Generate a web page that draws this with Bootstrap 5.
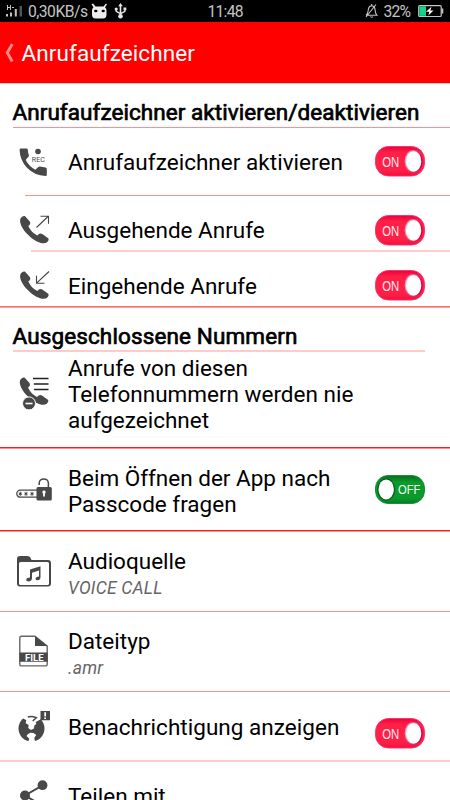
<!DOCTYPE html>
<html lang="de">
<head>
<meta charset="utf-8">
<meta name="viewport" content="width=device-width, initial-scale=1">
<title>Anrufaufzeichner</title>
<link href="https://cdn.jsdelivr.net/npm/bootstrap@5.3.0/dist/css/bootstrap.min.css" rel="stylesheet">
<style>
html,body{overflow:hidden}
body{font-family:Roboto,sans-serif;font-size:22.5px;line-height:26.4px;color:#000;background:#fff;height:800px;width:450px}
.statusbar{height:22px;background:#000;color:#c4c4c4;font-size:15.7px;line-height:22px}
.titlebar{height:61px;background:red;color:#fff;line-height:63px;letter-spacing:.09px}
.edge{height:1px;background:#dcc}
.heading{padding-left:12.5px;-webkit-text-stroke:.7px #000;letter-spacing:.06px}
.heading.h-2{letter-spacing:.12px}
.entry{width:450px}
.entry>svg{flex:none}
.label{width:307px;flex:none}
.sub{font-size:17.5px;line-height:20.5px;margin-top:4px;color:#666;font-style:italic;letter-spacing:.22px}
.rule{height:1px;background:#ff8e8e}
.rule-soft{height:2px;background:#ffcaca}
.rule-mid{height:2px;background:linear-gradient(#ff6a6a 50%,#ffa0a0 50%)}
.rule-strong{height:2px;background:linear-gradient(#ff1c1c 50%,#ff9090 50%)}
.h-1{height:43px;padding-top:15px}
.h-2{height:42px;padding-top:15px}
.r1{height:67px}.r1 .label{padding-top:21px;letter-spacing:.03px}.r1 .switch{margin-top:18px}
.r2{height:54px}.r2 .label{padding-top:21px}.r2 .switch{margin-top:18.5px}
.r3{height:54px}.r3 .label{padding-top:20.5px}.r3 .switch{margin-top:18px}
.r4{height:95px}.r4 .label{padding-top:2.5px}
.r5{height:81px}.r5 .label{padding-top:16px}.r5 .switch{margin-top:25.5px}
.r6{height:79px}.r6 .label{padding-top:16px}
.r7{height:79px}.r7 .label{padding-top:16px}
.r8{height:68px}.r8 .label{padding-top:22px;letter-spacing:.03px}.r8 .switch{margin-top:25.5px}
.r9{height:38px}.r9 .label{padding-top:21.4px}
</style>
<script src="https://cdn.jsdelivr.net/npm/bootstrap@5.3.0/dist/js/bootstrap.bundle.min.js"></script>
</head>
<body>
<svg width="0" height="0" class="position-absolute">
<defs>
<linearGradient id="pink" x1="0" y1="0" x2="0" y2="1"><stop offset="0" stop-color="#e8003c"/><stop offset=".2" stop-color="#ff2048"/><stop offset=".8" stop-color="#ff2048"/><stop offset="1" stop-color="#f0103c"/></linearGradient>
<linearGradient id="green" x1="0" y1="0" x2="0" y2="1"><stop offset="0" stop-color="#06701c"/><stop offset=".25" stop-color="#0c9a2c"/><stop offset=".8" stop-color="#0c9a2c"/><stop offset="1" stop-color="#087a20"/></linearGradient>
<linearGradient id="ring" x1="0" x2="1" y1="0" y2=".3"><stop offset="0" stop-color="#ffc0d4"/><stop offset="1" stop-color="#d0004e"/></linearGradient>
<symbol id="on" viewBox="0 0 50 31"><rect x=".5" y=".5" width="49" height="29.500" rx="13" fill="url(#pink)" stroke="#ff2a6c" stroke-width=".9"/><ellipse cx="38.700" cy="15.300" rx="9" ry="11.300" fill="url(#ring)"/><ellipse cx="38.600" cy="15.400" rx="7.700" ry="10.400" fill="#fff"/><text x="7.300" y="20.700" textLength="17" lengthAdjust="spacingAndGlyphs" font-family="Liberation Sans, sans-serif" font-size="14.500" fill="#ffe9ee">ON</text></symbol>
<symbol id="off" viewBox="0 0 50 29"><rect x=".5" y=".5" width="49" height="28" rx="12.500" fill="url(#green)" stroke="#0f8a36" stroke-width=".9"/><ellipse cx="11.200" cy="14.500" rx="9" ry="11" fill="#075d18"/><ellipse cx="11.200" cy="14.400" rx="7.700" ry="10" fill="#fff"/><text x="23" y="19.200" textLength="22.500" lengthAdjust="spacingAndGlyphs" font-family="Liberation Sans, sans-serif" font-size="13.300" fill="#f4fff6">OFF</text></symbol>
<path id="handset" d="M.7 3C2 1 4 0 5.500 1L10 6C11 7.500 10.500 9 8.500 10.500C10.500 15 13.500 18 17.500 20C19 18 20.500 17.300 22.500 18.400L28.400 22.800C29.300 23.800 28.800 25.500 27 27C23 29.500 15 26 9 20C2.500 14 -1 7 .7 3Z"/>
</defs>
</svg>

<div class="statusbar">
<svg class="d-block" width="450" height="22">
<g fill="#c4c4c4">
<path d="M7 5h1v2h2V5h1v5h-1V8H8v2H7zM12 7h2v1h-2zM6 14h2v2.500H6zM10 12.500h2v4h-2zM14.800 9h2v7.500h-2z"/><path d="M19.500 6h2.500v10.500h-2.500z" fill="#555"/>
<text x="28" y="16.500" textLength="60" font-size="15.700">0,30KB/s</text>
<path fill="#eee" d="M93 3.500l2.500 3h8l2.500-3 1 .8-2 2.900q1.500 1.200 1.500 3.300v4q0 4-3.500 4H95.500q-3.500 0-3.500-4v-4q0-2.100 1.500-3.300l-2-2.900z"/>
<ellipse cx="95.800" cy="11" rx="1.700" ry="1.300" fill="#000"/><ellipse cx="103.200" cy="11" rx="1.700" ry="1.300" fill="#000"/>
<g fill="#e6e6e6"><path d="M120.500 3l2.300 3.200h-4.600zM119.700 5.500h1.600v10h-1.600z"/><circle cx="120.500" cy="16.300" r="2.300"/><circle cx="116.200" cy="9" r="1.600"/><path d="M123.500 7.500h2.800v2.800h-2.800z"/></g>
<path d="M116.200 9.500v1.800l4.300 2.400 4.400-2.400V9" fill="none" stroke="#e6e6e6" stroke-width="1.400"/>
<text x="207.500" y="17" textLength="36" font-size="15.700">11:48</text>
<g fill="none" stroke="#c4c4c4" stroke-width="1.100"><path d="M366 15.300h11c-2-1.700-1.600-4-2-6.200q-.5-3-3.300-3.300-2.800.3-3.300 3.300c-.4 2.200 0 4.500-2.400 6.200M370.300 16.500q1.300 1.500 2.600 0M371.700 5.500V4M376 4.500l-10 12.500"/></g>
<text x="383.500" y="17" textLength="27.500" font-size="15.700">32%</text>
<rect x="418.700" y="5.700" width="22.500" height="10.800" rx="1" fill="none" stroke="#c4c4c4" stroke-width="1.200"/><path d="M441.500 8.500h1.800v5h-1.800z"/>
<path fill="#14d38c" d="M419.300 6.300h6.700v9.600h-6.700z"/><path fill="#fff" d="M431.500 6.800l-5.500 5h3.300l-1 3.800 5.200-5.200h-3.200z"/>
</g>
</svg>
</div>
<header class="titlebar d-flex">
<svg width="21.500" height="61" viewBox="0 22 21.500 61"><path d="M12.300 44L7.300 52.800l5 8.700" fill="none" stroke="#ff8c8c" stroke-width="2.900"/></svg>
<span>Anrufaufzeichner</span>
</header>
<div class="edge"></div>

<main>
<div class="heading h-1">Anrufaufzeichner aktivieren/deaktivieren</div>
<div class="rule" style="margin-left:12.5px"></div>

<div class="entry r1 d-flex align-items-start">
<svg width="68" height="67" viewBox="0 128 68 67" fill="#484848"><path d="M21 148.500h5.500q1.200 0 1.300 1.200.2 3 1.200 6-.1.800-.8 1.400l-2.500 3q3.300 6.400 9.600 9.600l3-2.800q.8-.7 1.700-.4 2.700.8 5.500.9 1.300.1 1.300 1.300v6q0 1.200-1.300 1.200-11-.4-18.500-8.200-7.200-7.700-7.400-18 .1-1.200 1.400-1.200z"/><circle cx="38" cy="151.500" r="2.800"/><text x="31.800" y="161.500" font-size="7" textLength="13">REC</text></svg>
<div class="label">Anrufaufzeichner aktivieren</div>
<svg class="switch" width="50" height="31"><use href="#on"/></svg>
</div>
<div class="rule" style="margin-left:25px"></div>

<div class="entry r2 d-flex align-items-start">
<svg width="68" height="54" viewBox="0 196 68 54" fill="#484848"><use href="#handset" x="19.800" y="215.500"/><path d="M36.500 227.500L48 216.500M40.500 216.300h8v7.500" fill="none" stroke="#444" stroke-width="1.100"/></svg>
<div class="label">Ausgehende Anrufe</div>
<svg class="switch" width="50" height="31"><use href="#on"/></svg>
</div>
<div class="rule-soft" style="margin-left:31px"></div>

<div class="entry r3 d-flex align-items-start">
<svg width="68" height="54" viewBox="0 252 68 54" fill="#484848"><use href="#handset" x="19.800" y="271"/><path d="M49 271.500L36.800 282.800M36.500 275.800v7.500h8" fill="none" stroke="#444" stroke-width="1.100"/></svg>
<div class="label">Eingehende Anrufe</div>
<svg class="switch" width="50" height="31"><use href="#on"/></svg>
</div>
<div class="rule-mid"></div>

<div class="heading h-2">Ausgeschlossene Nummern</div>
<div class="rule-soft" style="margin:0 25px 0 12.5px"></div>

<div class="entry r4 d-flex align-items-start">
<svg width="68" height="95" viewBox="0 352 68 95" fill="#484848"><use href="#handset" x="19.500" y="377"/><path d="M31 377.500h18v14H34.500z" fill="#fff"/><path d="M33 378.500h15.500M33.800 383.900h14.700M34 389.500h14.500" stroke="#222" stroke-width="1.500"/><circle cx="29" cy="403.400" r="6.500" stroke="#fff"/><path d="M25.500 402.700h7v1.600h-7z" fill="#fff"/></svg>
<div class="label">Anrufe von diesen<br>Telefonnummern werden nie<br>aufgezeichnet</div>
</div>
<div class="rule-strong"></div>

<div class="entry r5 d-flex align-items-start">
<svg width="68" height="81" viewBox="0 449 68 81" fill="#484848"><path d="M37 490.200H20.300a3.500 3.500 0 0 0 0 7H37" fill="none" stroke="#484848" stroke-width="1.300"/><path d="M20.300 491.800v4M18.700 492.800l3.200 2M21.900 492.800l-3.200 2M26 491.800v4M24.400 492.800l3.200 2M27.600 492.800l-3.200 2M32 491.800v4M30.400 492.800l3.200 2M33.600 492.800l-3.200 2" stroke="#333" stroke-width=".9"/><rect x="36.500" y="487" width="15.300" height="13.500" rx="1.500"/><path d="M39.200 485v-2q.4-4 4.600-4t4.600 4v5" fill="none" stroke="#484848" stroke-width="1.500"/><path d="M44 490.500a1.800 1.800 0 0 1 .9 3.300v2.700h-1.800v-2.700a1.800 1.800 0 0 1 .9-3.300z" fill="#fff"/></svg>
<div class="label">Beim Öffnen der App nach<br>Passcode fragen</div>
<svg class="switch" width="50" height="29"><use href="#off"/></svg>
</div>
<div class="rule-strong"></div>

<div class="entry r6 d-flex align-items-start">
<svg width="68" height="79" viewBox="0 532 68 79" fill="#484848"><path fill-rule="evenodd" d="M17 583.500V559q0-3 3-3h7.500q2 0 2.800 1.600l1.200 2.400h16.500q3 0 3 3v20.500q0 3-3 3H20q-3 0-3-3zM20.500 562q-1.500 0-1.500 1.500v20q0 1.500 1.500 1.500h27q1.500 0 1.500-1.500v-20q0-1.500-1.500-1.500z"/><path d="M30 569.500l10.500-3.300v11q-.2 2.800-2.800 3-2.200 0-2.200-1.500.2-2.200 3.500-2.300v-6l-7 2.300v5.900q-.5 2.800-3.600 2.900-2.300-.2-2.200-1.700.5-2.200 3.800-2.300z"/></svg>
<div class="label">Audioquelle<div class="sub">VOICE CALL</div></div>
</div>
<div class="rule"></div>

<div class="entry r7 d-flex align-items-start">
<svg width="68" height="79" viewBox="0 612 68 79" fill="#484848"><path d="M20.500 636.300h14.500l12.200 9.800v18.300q0 1.500-1.500 1.500H21.300q-1.500 0-1.500-1.500v-26.700q0-1.400 1.400-1.400z" fill="#fff" stroke="#666" stroke-width="1.400"/><path d="M35 636.300l12.500 9.800H35zM19.500 652.500h28.200v9.200H19.500z"/><text x="25" y="660.500" textLength="18.500" lengthAdjust="spacingAndGlyphs" font-size="9.300" font-weight="700" fill="#fff">FILE</text></svg>
<div class="label">Dateityp<div class="sub">.amr</div></div>
</div>
<div class="rule"></div>

<div class="entry r8 d-flex align-items-start">
<svg width="68" height="68" viewBox="0 692 68 68" fill="#484848"><circle cx="31.500" cy="728.500" r="13"/><path d="M21.500 714l1.800 4.500 3 1.800-.6 3 3 1.700-.5 3 2.800 2 3-1.500.3-3 2-1.500-.6-2 4.300-2.200 3-1.500L41 713z" fill="#fff"/><path d="M28 734l2.500-1.200 3 .2 2.800 2-2 2.800.8 4.500H28l1.300-3.500-2.800-2.700z" fill="#fff"/><path d="M27.800 717q4-1.200 8.500.8l-3.600 3.200" fill="none" stroke="#484848" stroke-width="1.500"/><path d="M40.500 711h9.500v9.200h-8l-3.800 1.600 2.300-2.600z"/><path d="M44.300 712.300H46v4.200h-1.700zM44.300 717.500H46v1.500h-1.700z" fill="#fff"/></svg>
<div class="label">Benachrichtigung anzeigen</div>
<svg class="switch" width="50" height="31"><use href="#on"/></svg>
</div>
<div class="rule-soft"></div>

<div class="entry r9 d-flex align-items-start">
<svg width="68" height="38" viewBox="0 762 68 38" fill="#484848"><path d="M42.500 785.300L25 795.500l17 10" fill="none" stroke="#484848" stroke-width="2"/><circle cx="42.500" cy="785.200" r="4.900"/><circle cx="25" cy="795.500" r="5"/></svg>
<div class="label">Teilen mit</div>
</div>
</main>
</body>
</html>
